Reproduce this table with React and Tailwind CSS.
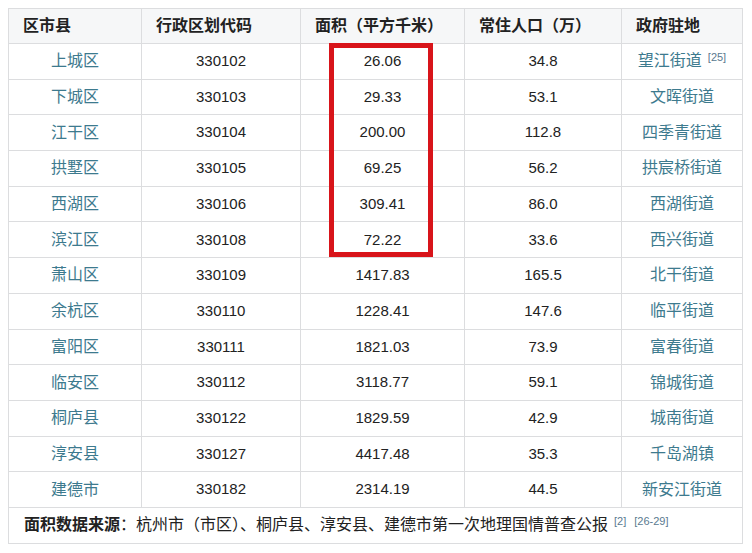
import React from 'react'

const rows = [
  ['上城区', '330102', '26.06', '34.8', '望江街道', '[25]'],
  ['下城区', '330103', '29.33', '53.1', '文晖街道'],
  ['江干区', '330104', '200.00', '112.8', '四季青街道'],
  ['拱墅区', '330105', '69.25', '56.2', '拱宸桥街道'],
  ['西湖区', '330106', '309.41', '86.0', '西湖街道'],
  ['滨江区', '330108', '72.22', '33.6', '西兴街道'],
  ['萧山区', '330109', '1417.83', '165.5', '北干街道'],
  ['余杭区', '330110', '1228.41', '147.6', '临平街道'],
  ['富阳区', '330111', '1821.03', '73.9', '富春街道'],
  ['临安区', '330112', '3118.77', '59.1', '锦城街道'],
  ['桐庐县', '330122', '1829.59', '42.9', '城南街道'],
  ['淳安县', '330127', '4417.48', '35.3', '千岛湖镇'],
  ['建德市', '330182', '2314.19', '44.5', '新安江街道'],
]

const font = { fontFamily: '"Liberation Sans", "Noto Sans CJK SC", sans-serif' }

export default function App () {
  return (
    <div className="w-[752px] h-[553px] bg-white pt-[8px] pl-[8px]" style={font}>
      <div className="relative w-[734px]">
        <table className="w-[734px] table-fixed border-collapse text-[#222]">
          <colgroup>
            <col className="w-[133px]" />
            <col className="w-[159px]" />
            <col className="w-[164px]" />
            <col className="w-[157px]" />
            <col className="w-[121px]" />
          </colgroup>
          <thead>
            <tr className="h-[35px] bg-[#f6f7f8]">
              {['区市县', '行政区划代码', '面积（平方千米）', '常住人口（万）', '政府驻地'].map(h => (
                <th key={h} className="border border-[#dcdddf] px-[14px] text-left text-[16px] font-bold">{h}</th>
              ))}
            </tr>
          </thead>
          <tbody>
            {rows.map(r => (
              <tr key={r[0]} className="h-[35.7px]">
                <td className="border border-[#dcdddf] text-center text-[16px] text-[#3d7a8e]">{r[0]}</td>
                <td className="border border-[#dcdddf] text-center text-[15px]">{r[1]}</td>
                <td className="border border-[#dcdddf] text-center text-[15px]">{r[2]}</td>
                <td className="border border-[#dcdddf] text-center text-[15px]">{r[3]}</td>
                <td className="border border-[#dcdddf] text-center text-[16px] text-[#3d7a8e] whitespace-nowrap">
                  {r[4]}
                  {r[5] && <sup className="ml-[6px] text-[11px] text-[#5a7a90]">{r[5]}</sup>}
                </td>
              </tr>
            ))}
            <tr className="h-[36px]">
              <td colSpan={5} className="border border-[#dcdddf] pl-[15px] text-[16px] text-[#222] whitespace-nowrap">
                <span className="font-bold">面积数据来源</span>：杭州市（市区）、桐庐县、淳安县、建德市第一次地理国情普查公报
                <sup className="ml-[6px] text-[11px] text-[#5a7a90]">[2]</sup>
                <sup className="ml-[8px] text-[11px] text-[#5a7a90]">[26-29]</sup>
              </td>
            </tr>
          </tbody>
        </table>
        <div className="absolute left-[321px] top-[35px] w-[104px] h-[214px] border-[5px] border-[#d8141a] pointer-events-none" />
      </div>
    </div>
  )
}
